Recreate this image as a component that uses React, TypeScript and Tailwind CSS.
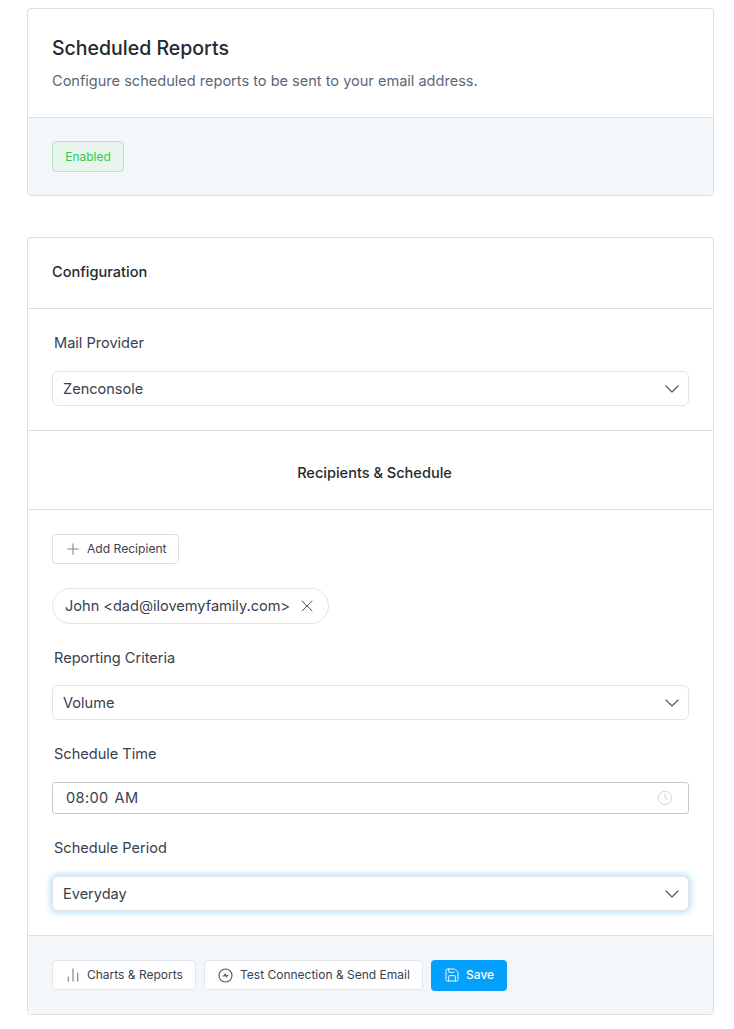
import { BarChart2, ChevronDown, Clock, Plus, Save, X } from "lucide-react";

function SelectBox({ value, focused }: { value: string; focused?: boolean }) {
  return (
    <div
      className={
        focused
          ? "flex h-[35px] items-center justify-between rounded-md border border-[#e2e4e8] bg-white pl-[10px] pr-[4px] shadow-[0_0_6px_2px_#b5e3fb]"
          : "flex h-[35px] items-center justify-between rounded-md border border-[#e2e4e8] bg-white pl-[10px] pr-[4px]"
      }
    >
      <span className="pt-[2px] text-[14.56px] text-[#374151]">{value}</span>
      <ChevronDown size={24} strokeWidth={1.15} className="text-[#475a75]" />
    </div>
  );
}

function Label({ children }: { children: string }) {
  return <div className="pl-[2px] text-[14.56px] leading-5 text-[#374151]">{children}</div>;
}

function TestIcon() {
  return (
    <svg width="15" height="15" viewBox="0 0 15 15" fill="none" stroke="#4b5563" strokeWidth="1.1" className="shrink-0">
      <circle cx="7.5" cy="7.5" r="6.5" />
      <path d="M4.6 8h1.5l1-2 1.2 3 .8-1.4h1.3" strokeLinejoin="round" />
    </svg>
  );
}

export default function App() {
  return (
    <div className="min-h-[1029px] bg-white pl-[27px] pr-[20px] pt-2 font-['Inter',sans-serif]">
      {/* Status card */}
      <div className="overflow-hidden rounded border border-[#dcdfe3] bg-white">
        <div className="h-[109px] border-b border-[#dcdfe3] px-6 pt-[25px]">
          <h1 className="text-[19.5px] font-medium leading-7 text-[#24292f]">Scheduled Reports</h1>
          <p className="mt-[9px] text-[14.56px] leading-5 text-[#5b6779]">
            Configure scheduled reports to be sent to your email address.
          </p>
        </div>
        <div className="h-[77px] bg-[#f4f7fa] px-6 pt-[23px]">
          <span className="flex h-[31px] w-[72px] items-center justify-center rounded border border-[#b6e8c4] bg-[#e8f5ec] text-xs text-[#2ecc52]">
            Enabled
          </span>
        </div>
      </div>

      {/* Configuration card */}
      <div className="mt-[41px] overflow-hidden rounded border border-[#dcdfe3] bg-white">
        <div className="flex h-[71px] items-center border-b border-[#dcdfe3] px-6">
          <h2 className="text-[14.56px] font-medium text-[#24292f]">Configuration</h2>
        </div>

        <div className="h-[122px] border-b border-[#dcdfe3] px-6 pt-6">
          <Label>Mail Provider</Label>
          <div className="mt-[18px]">
            <SelectBox value="Zenconsole" />
          </div>
        </div>

        <div className="flex h-[79px] items-center justify-center border-b border-[#dcdfe3] pl-[8px] pt-[8px]">
          <h3 className="text-[14.56px] font-medium text-[#24292f]">Recipients &amp; Schedule</h3>
        </div>

        <div className="h-[425px] px-6 pt-6">
          <button className="flex h-[30px] w-[127px] items-center gap-[5px] rounded border border-[#dcdfe3] bg-white pl-[11px] text-[12.1px] text-[#374151]">
            <Plus size={18} strokeWidth={1.4} className="text-[#7b8794]" />
            Add Recipient
          </button>

          <div className="mt-[24px] flex h-[36px] w-[277px] items-center justify-between rounded-[18px] border border-[#e2e4e8] pl-[12px] pr-[11px]">
            <span className="pt-px text-[14.56px] text-[#374151]">John &lt;dad@ilovemyfamily.com&gt;</span>
            <X size={20} strokeWidth={1.2} className="text-[#475a75]" />
          </div>

          <div className="mt-6">
            <Label>Reporting Criteria</Label>
          </div>
          <div className="mt-[17px]">
            <SelectBox value="Volume" />
          </div>

          <div className="mt-[24px]">
            <Label>Schedule Time</Label>
          </div>
          <div className="mt-[18px] flex h-[32px] items-center justify-between rounded-[3px] border border-[#c8c8c8] pl-[13px] pr-[15px]">
            <span className="flex gap-[6px] pt-px text-[14.56px] tracking-wide text-[#374151]">
              <span>08:00</span>
              <span>AM</span>
            </span>
            <Clock size={16} strokeWidth={1.5} className="text-[#d6d6d6]" />
          </div>

          <div className="mt-[24px]">
            <Label>Schedule Period</Label>
          </div>
          <div className="mt-[18px]">
            <SelectBox value="Everyday" focused />
          </div>
        </div>

        <div className="flex h-[79px] items-center gap-2 border-t border-[#dcdfe3] bg-[#f4f7fa] px-6">
          <button className="flex h-[30px] w-[144px] items-center gap-[6px] rounded border border-[#e2e5e9] bg-white pl-[12px] text-xs text-[#374151]">
            <BarChart2 size={16} strokeWidth={2} className="text-[#8a94a0]" />
            Charts &amp; Reports
          </button>
          <button className="flex h-[30px] w-[219px] items-center gap-[7px] rounded border border-[#e2e5e9] bg-white pl-[13px] text-xs text-[#374151]">
            <TestIcon />
            Test Connection &amp; Send Email
          </button>
          <button className="flex h-[31px] w-[76px] items-center gap-[6px] rounded bg-[#05a0fb] pl-[13px] text-xs font-medium text-white">
            <Save size={16} strokeWidth={1.4} />
            Save
          </button>
        </div>
      </div>
    </div>
  );
}
